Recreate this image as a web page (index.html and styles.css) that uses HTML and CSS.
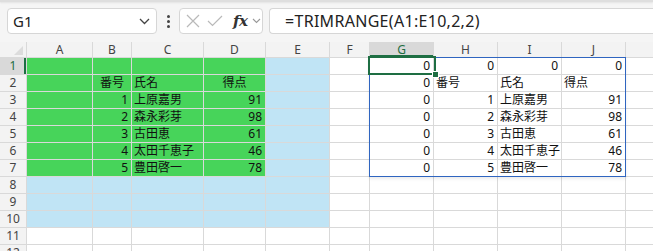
FILE: index.html
```html
<!DOCTYPE html>
<html lang="ja">
<head>
<meta charset="utf-8">
<link rel="stylesheet" href="styles.css">
</head>
<body>
<div class="app">
  <div class="topline"></div>
  <div class="fbar">
    <div class="namebox">
      <span class="nb-text">G1</span>
      <svg class="chev" width="11" height="7" viewBox="0 0 11 7"><path d="M1 1 L5.5 5.5 L10 1" fill="none" stroke="#444" stroke-width="1.3"/></svg>
    </div>
    <div class="dots"><i></i><i></i><i></i></div>
    <div class="btnbox">
      <svg class="ico" width="14" height="14" viewBox="0 0 14 14"><path d="M1 1 L13 13 M13 1 L1 13" stroke="#b9b9b9" stroke-width="1.2" fill="none"/></svg>
      <svg class="ico" width="16" height="12" viewBox="0 0 16 12"><path d="M1 6 L5.5 10.5 L15 1" stroke="#b9b9b9" stroke-width="1.2" fill="none"/></svg>
      <span class="fx">fx</span>
      <svg class="chev2" width="9" height="6" viewBox="0 0 9 6"><path d="M1 1 L4.5 4.5 L8 1" fill="none" stroke="#999" stroke-width="1.1"/></svg>
    </div>
    <div class="formula">=TRIMRANGE(A1:E10,2,2)</div>
  </div>
  <div class="sheet">
    <div class="grid">
      <div class="corner"><span class="tri"></span></div>
      <div class="ch">A</div><div class="ch">B</div><div class="ch">C</div><div class="ch">D</div><div class="ch">E</div><div class="ch">F</div><div class="ch selc">G</div><div class="ch">H</div><div class="ch">I</div><div class="ch">J</div><div class="ch"></div>

      <div class="rh selr">1</div>
      <div class="c g"></div><div class="c g"></div><div class="c g"></div><div class="c g"></div><div class="c b"></div><div class="c"></div>
      <div class="c r">0</div><div class="c r">0</div><div class="c r">0</div><div class="c r">0</div><div class="c"></div>

      <div class="rh">2</div>
      <div class="c g"></div><div class="c g m">番号</div><div class="c g">氏名</div><div class="c g m">得点</div><div class="c b"></div><div class="c"></div>
      <div class="c r">0</div><div class="c">番号</div><div class="c">氏名</div><div class="c">得点</div><div class="c"></div>

      <div class="rh">3</div>
      <div class="c g"></div><div class="c g r">1</div><div class="c g">上原嘉男</div><div class="c g r">91</div><div class="c b"></div><div class="c"></div>
      <div class="c r">0</div><div class="c r">1</div><div class="c">上原嘉男</div><div class="c r">91</div><div class="c"></div>

      <div class="rh">4</div>
      <div class="c g"></div><div class="c g r">2</div><div class="c g">森永彩芽</div><div class="c g r">98</div><div class="c b"></div><div class="c"></div>
      <div class="c r">0</div><div class="c r">2</div><div class="c">森永彩芽</div><div class="c r">98</div><div class="c"></div>

      <div class="rh">5</div>
      <div class="c g"></div><div class="c g r">3</div><div class="c g">古田恵</div><div class="c g r">61</div><div class="c b"></div><div class="c"></div>
      <div class="c r">0</div><div class="c r">3</div><div class="c">古田恵</div><div class="c r">61</div><div class="c"></div>

      <div class="rh">6</div>
      <div class="c g"></div><div class="c g r">4</div><div class="c g">太田千恵子</div><div class="c g r">46</div><div class="c b"></div><div class="c"></div>
      <div class="c r">0</div><div class="c r">4</div><div class="c">太田千恵子</div><div class="c r">46</div><div class="c"></div>

      <div class="rh">7</div>
      <div class="c g"></div><div class="c g r">5</div><div class="c g">豊田啓一</div><div class="c g r">78</div><div class="c b"></div><div class="c"></div>
      <div class="c r">0</div><div class="c r">5</div><div class="c">豊田啓一</div><div class="c r">78</div><div class="c"></div>

      <div class="rh">8</div>
      <div class="c b"></div><div class="c b"></div><div class="c b"></div><div class="c b"></div><div class="c b"></div><div class="c"></div>
      <div class="c"></div><div class="c"></div><div class="c"></div><div class="c"></div><div class="c"></div>

      <div class="rh">9</div>
      <div class="c b"></div><div class="c b"></div><div class="c b"></div><div class="c b"></div><div class="c b"></div><div class="c"></div>
      <div class="c"></div><div class="c"></div><div class="c"></div><div class="c"></div><div class="c"></div>

      <div class="rh">10</div>
      <div class="c b"></div><div class="c b"></div><div class="c b"></div><div class="c b"></div><div class="c b"></div><div class="c"></div>
      <div class="c"></div><div class="c"></div><div class="c"></div><div class="c"></div><div class="c"></div>

      <div class="rh">11</div>
      <div class="c"></div><div class="c"></div><div class="c"></div><div class="c"></div><div class="c"></div><div class="c"></div>
      <div class="c"></div><div class="c"></div><div class="c"></div><div class="c"></div><div class="c"></div>

      <div class="rh">12</div>
      <div class="c"></div><div class="c"></div><div class="c"></div><div class="c"></div><div class="c"></div><div class="c"></div>
      <div class="c"></div><div class="c"></div><div class="c"></div><div class="c"></div><div class="c"></div>
    </div>
    <div class="spill"></div>
    <div class="selbox"><span class="handle"></span></div>
  </div>
</div>
</body>
</html>
```

FILE: styles.css
```css
html, body {
  margin: 0;
  padding: 0;
  background: #fff;
}
.app {
  width: 653px;
  height: 251px;
  overflow: hidden;
  font-family: "Noto Sans", "Noto Sans CJK JP", sans-serif;
  background: #f5f5f5;
}
.topline {
  height: 2px;
  background: #dedede;
  box-shadow: 0 1px 2px rgba(0,0,0,0.08);
}
.fbar {
  height: 40px;
  box-sizing: border-box;
  padding-top: 6px;
  display: flex;
  align-items: flex-start;
}
.namebox {
  margin-left: 7px;
  width: 150px;
  height: 26px;
  box-sizing: border-box;
  background: #fff;
  border: 1px solid #d6d6d6;
  border-radius: 4px;
  display: flex;
  align-items: center;
  padding-left: 5px;
  padding-right: 5px;
}
.nb-text {
  font-size: 15px;
  color: #222;
  flex: 1;
}
.chev {
  margin-right: 1px;
}
.dots {
  width: 22px;
  height: 26px;
  display: flex;
  flex-direction: column;
  align-items: center;
  justify-content: center;
  gap: 2px;
}
.dots i {
  width: 3px;
  height: 3px;
  background: #444;
  border-radius: 50%;
}
.btnbox {
  width: 84px;
  height: 26px;
  box-sizing: border-box;
  background: #fff;
  border: 1px solid #d6d6d6;
  border-radius: 4px;
  display: flex;
  align-items: center;
  padding-left: 6px;
}
.ico {
  margin-right: 7px;
}
.fx {
  font-family: "DejaVu Serif", "Liberation Serif", serif;
  font-style: italic;
  font-weight: bold;
  font-size: 15px;
  color: #333;
  margin-left: 3px;
  margin-right: 5px;
  letter-spacing: -0.5px;
}
.formula {
  margin-left: 6px;
  flex: 1;
  height: 26px;
  box-sizing: border-box;
  background: #fff;
  border: 1px solid #d6d6d6;
  border-right: none;
  border-radius: 4px 0 0 4px;
  padding-left: 15px;
  font-size: 16px;
  letter-spacing: 0.3px;
  line-height: 24px;
  color: #222;
  white-space: nowrap;
}
.sheet {
  position: relative;
  height: 209px;
  overflow: hidden;
}
.grid {
  display: grid;
  grid-template-columns: 26px 65px 38px 71px 61px 63px 39px 63px 63px 63px 63px 64px;
  grid-template-rows: 15px repeat(12, 16px);
  gap: 1px;
  background: #d9d9d9;
  width: max-content;
}
.corner {
  background: #f3f3f3;
  position: relative;
}
.tri {
  position: absolute;
  right: 3px;
  bottom: 2px;
  width: 0;
  height: 0;
  border-left: 9px solid transparent;
  border-bottom: 9px solid #dcdcdc;
}
.ch {
  background: #f3f3f3;
  font-size: 12px;
  line-height: 15px;
  text-align: center;
  color: #444;
}
.ch.selc {
  background: #d9d9d9;
  color: #1e6e43;
  box-shadow: inset 0 -2px 0 #1e6e43;
}
.rh {
  background: #f3f3f3;
  font-size: 12px;
  line-height: 16px;
  text-align: center;
  color: #444;
}
.rh.selr {
  background: #d9d9d9;
  color: #1e6e43;
  box-shadow: inset -2px 0 0 #1e6e43;
}
.c {
  background: #fff;
  font-size: 12px;
  line-height: 16px;
  color: #111;
  padding: 0 2px;
  white-space: nowrap;
  overflow: hidden;
}
.c.g { background: #47d45a; }
.c.b { background: #c0e4f5; }
.c.r { text-align: right; padding-right: 3px; }
.c.m { text-align: center; }
.spill {
  position: absolute;
  left: 369px;
  top: 15px;
  width: 255px;
  height: 118px;
  border: 1px solid #2f65c0;
  box-shadow: 0 2px 3px rgba(0,0,0,0.08);
}
.selbox {
  position: absolute;
  left: 368px;
  top: 14px;
  width: 64px;
  height: 15px;
  border: 2px solid #1e6e43;
}
.handle {
  position: absolute;
  right: -5px;
  bottom: -5px;
  width: 5px;
  height: 5px;
  background: #1e6e43;
  border: 1px solid #fff;
}
```
